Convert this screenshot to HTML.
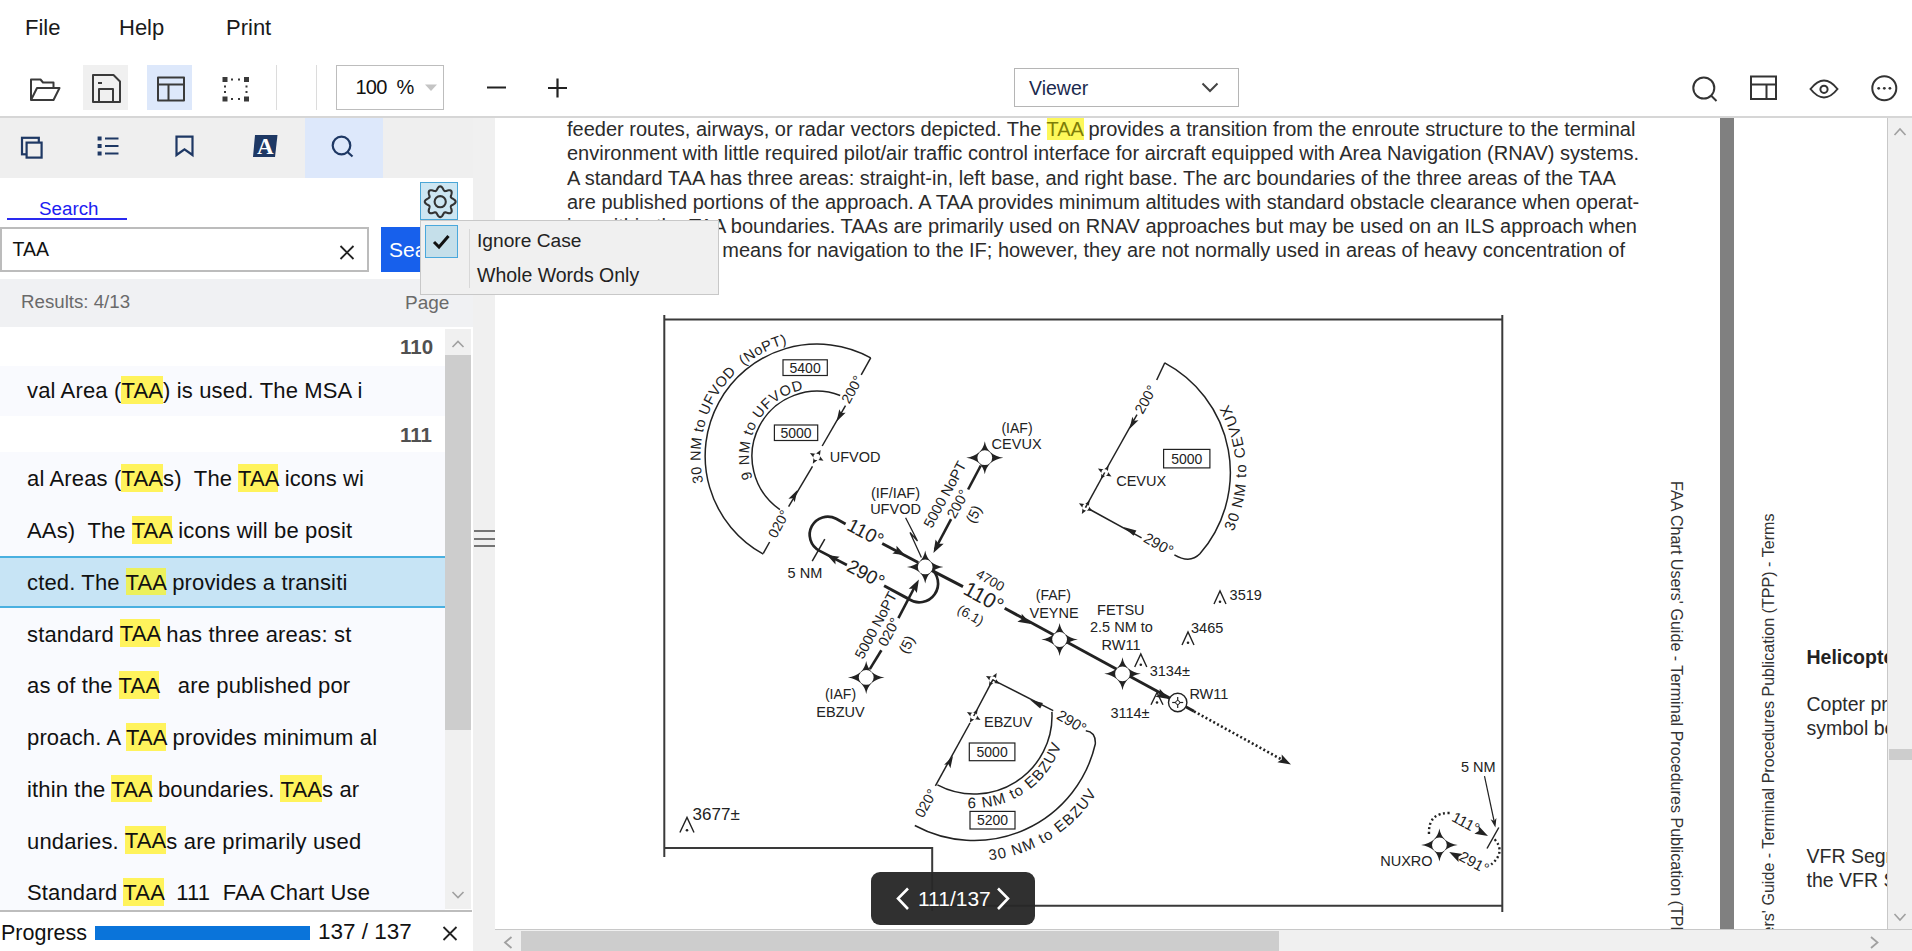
<!DOCTYPE html>
<html><head><meta charset="utf-8">
<style>
*{box-sizing:border-box}
html,body{margin:0;padding:0}
body{width:1912px;height:951px;overflow:hidden;position:relative;background:#fff;font-family:"Liberation Sans",sans-serif;color:#111}
.a{position:absolute}
.t{position:absolute;white-space:pre;line-height:1}
svg{position:absolute;overflow:visible}
.menu{font-size:22px;color:#1a1a1a;top:16.6px}
.hl{background:#fff35c}
.row{position:absolute;left:0;width:445px;background:#f9fafe}
.rt{position:absolute;left:27px;font-size:22px;letter-spacing:0.15px;white-space:pre;line-height:1;color:#111}
.rt .hl{padding:2.4px 0 0.6px}
.row.sel{background:#c7e4f5;border-top:2.5px solid #4ab0e0;border-bottom:2px solid #4ab0e0}
.doc{font-size:20px;color:#2b2b2b;left:567px}
</style></head>
<body>
<!-- menu -->
<div class="t menu" style="left:25px">File</div>
<div class="t menu" style="left:119px">Help</div>
<div class="t menu" style="left:226px">Print</div>

<!-- toolbar -->
<div class="a" style="left:83px;top:65px;width:45px;height:45px;background:#f0f0f0"></div>
<div class="a" style="left:147px;top:65px;width:45px;height:45px;background:#dde8fb"></div>
<div class="a" style="left:276px;top:65px;width:1px;height:45px;background:#dcdcdc"></div>
<div class="a" style="left:316px;top:65px;width:1px;height:45px;background:#dcdcdc"></div>
<div class="a" style="left:336px;top:65px;width:108px;height:45px;border:1px solid #bdbdbd;background:#fff"></div>
<div class="t" style="left:355.5px;top:77px;font-size:20px;color:#111;letter-spacing:-0.8px">100</div>
<div class="t" style="left:396.5px;top:77px;font-size:20px;color:#111">%</div>
<svg style="left:0;top:0" width="1912" height="118">
 <!-- open folder -->
 <g fill="none" stroke="#3a3a3a" stroke-width="2" stroke-linejoin="round">
  <path d="M31 100 L31 79.5 L40.5 79.5 L43 82.5 L53.5 82.5 L53.5 88"/>
  <path d="M31 100 L37 88 L59.5 88 L53.5 100 Z"/>
  <!-- save -->
  <path d="M93 75 L113.5 75 L120 81.5 L120 102 L93 102 Z"/>
  <path d="M99 102 L99 89 L113 89 L113 102"/>
  <path d="M98 83 L102 83"/>
  <!-- layout -->
  <rect x="158" y="77.5" width="26" height="23"/>
  <path d="M158 84.5 L184 84.5 M168.5 84.5 L168.5 100.5"/>
 </g>
 <!-- selection -->
 <g fill="#3a3a3a">
  <rect x="222.5" y="77" width="5" height="5"/><rect x="244" y="77" width="5" height="5"/>
  <rect x="222.5" y="96.5" width="5" height="5"/><rect x="244" y="96.5" width="5" height="5"/>
  <rect x="231" y="78.5" width="2" height="2"/><rect x="238" y="78.5" width="2" height="2"/>
  <rect x="231" y="98" width="2" height="2"/><rect x="238" y="98" width="2" height="2"/>
  <rect x="224" y="85.5" width="2" height="2"/><rect x="224" y="91" width="2" height="2"/>
  <rect x="245.5" y="85.5" width="2" height="2"/><rect x="245.5" y="91" width="2" height="2"/>
 </g>
 <!-- zoom dropdown triangle -->
 <path d="M425 84.5 L437 84.5 L431 91 Z" fill="#c4c4c4"/>
 <!-- minus plus -->
 <path d="M487 87.5 L506 87.5 M548 88 L567 88 M557.5 78.5 L557.5 97.5" stroke="#222" stroke-width="2.2" fill="none"/>
 <!-- right icons -->
 <g fill="none" stroke="#333" stroke-width="2">
  <circle cx="1703.8" cy="88" r="10.5"/>
  <path d="M1711 95.5 L1716.5 101"/>
  <rect x="1751" y="76.5" width="25" height="22.5"/>
  <path d="M1751 84.5 L1776 84.5 M1766.5 84.5 L1766.5 99"/>
  <path d="M1810.5 89 Q1824 72 1837.5 89 Q1824 106 1810.5 89 Z"/>
  <circle cx="1824" cy="89.3" r="3.6"/>
  <circle cx="1884.3" cy="88.3" r="12"/>
 </g>
 <g fill="#333"><circle cx="1878.7" cy="88.3" r="1.4"/><circle cx="1884.3" cy="88.3" r="1.4"/><circle cx="1889.9" cy="88.3" r="1.4"/></g>
</svg>
<!-- viewer dropdown -->
<div class="a" style="left:1014px;top:68px;width:225px;height:39px;border:1px solid #b5b5b5;background:#fff"></div>
<div class="t" style="left:1029px;top:78.5px;font-size:19.5px;color:#1b2a4e">Viewer</div>
<svg style="left:1200px;top:80px" width="22" height="16"><path d="M2.5 3.5 L10 11 L17.5 3.5" fill="none" stroke="#444" stroke-width="2"/></svg>

<!-- toolbar bottom line -->
<div class="a" style="left:0;top:116px;width:1912px;height:2px;background:#d6d6d6"></div>

<!-- LEFT PANEL -->
<div class="a" style="left:0;top:118px;width:473px;height:60px;background:#efefef"></div>
<div class="a" style="left:305px;top:118px;width:78px;height:60px;background:#dde8fb"></div>
<div class="a" style="left:0;top:178px;width:473px;height:101px;background:#fff"></div>
<svg style="left:0;top:118px" width="473" height="60">
 <g fill="none" stroke="#1e3864" stroke-width="2.2">
  <rect x="22" y="19.8" width="16.8" height="16.5"/>
  <rect x="26.6" y="24.6" width="15" height="15" fill="#efefef"/>
  <path d="M97.6 20.5 L101.6 20.5 M97.6 28 L101.6 28 M97.6 35.5 L101.6 35.5" stroke-width="4"/>
  <path d="M105 20.5 L118.5 20.5 M105 28 L118.5 28 M105 35.5 L118.5 35.5"/>
  <path d="M176.5 18.6 L192.5 18.6 L192.5 37 L184.5 31.3 L176.5 37 Z"/>
  <circle cx="341.5" cy="27.5" r="8.8"/>
  <path d="M347.5 34 L352.5 38.5"/>
 </g>
 <path d="M255 17 L277.5 17 L275 39 L253 39 Z" fill="#1e3864"/>
 <text x="265.2" y="36.3" font-family="Liberation Serif" font-size="23" font-weight="bold" fill="#fff" text-anchor="middle">A</text>
</svg>
<!-- inner white panel in left pane; the area behind tab strip white bg extends -->
<div class="t" style="left:39px;top:199.5px;font-size:18.8px;color:#1c1cf2">Search</div>
<div class="a" style="left:7px;top:217.5px;width:120px;height:2px;background:#2a2af0"></div>
<!-- gear button -->
<div class="a" style="left:420px;top:182px;width:38px;height:38px;border:1px solid #4aa6d6;background:#cde6f2"></div>
<svg style="left:420px;top:182px" width="38" height="38">
 <path fill="none" stroke="#333" stroke-width="2.1" d="M35.60 19.70 L35.50 20.30 L35.19 20.88 L34.72 21.42 L34.11 21.90 L33.44 22.33 L32.76 22.71 L32.12 23.06 L31.58 23.40 L31.17 23.75 L30.92 24.14 L30.82 24.60 L30.86 25.13 L31.00 25.75 L31.21 26.45 L31.42 27.20 L31.60 27.98 L31.68 28.75 L31.63 29.47 L31.44 30.09 L31.09 30.59 L30.59 30.94 L29.97 31.13 L29.25 31.18 L28.48 31.10 L27.70 30.92 L26.95 30.71 L26.25 30.50 L25.63 30.36 L25.10 30.32 L24.64 30.42 L24.25 30.67 L23.90 31.08 L23.56 31.62 L23.21 32.26 L22.83 32.94 L22.40 33.61 L21.92 34.22 L21.38 34.69 L20.80 35.00 L20.20 35.10 L19.60 35.00 L19.02 34.69 L18.48 34.22 L18.00 33.61 L17.57 32.94 L17.19 32.26 L16.84 31.62 L16.50 31.08 L16.15 30.67 L15.76 30.42 L15.30 30.32 L14.77 30.36 L14.15 30.50 L13.45 30.71 L12.70 30.92 L11.92 31.10 L11.15 31.18 L10.43 31.13 L9.81 30.94 L9.31 30.59 L8.96 30.09 L8.77 29.47 L8.72 28.75 L8.80 27.98 L8.98 27.20 L9.19 26.45 L9.40 25.75 L9.54 25.13 L9.58 24.60 L9.48 24.14 L9.23 23.75 L8.82 23.40 L8.28 23.06 L7.64 22.71 L6.96 22.33 L6.29 21.90 L5.68 21.42 L5.21 20.88 L4.90 20.30 L4.80 19.70 L4.90 19.10 L5.21 18.52 L5.68 17.98 L6.29 17.50 L6.96 17.07 L7.64 16.69 L8.28 16.34 L8.82 16.00 L9.23 15.65 L9.48 15.26 L9.58 14.80 L9.54 14.27 L9.40 13.65 L9.19 12.95 L8.98 12.20 L8.80 11.42 L8.72 10.65 L8.77 9.93 L8.96 9.31 L9.31 8.81 L9.81 8.46 L10.43 8.27 L11.15 8.22 L11.92 8.30 L12.70 8.48 L13.45 8.69 L14.15 8.90 L14.77 9.04 L15.30 9.08 L15.76 8.98 L16.15 8.73 L16.50 8.32 L16.84 7.78 L17.19 7.14 L17.57 6.46 L18.00 5.79 L18.48 5.18 L19.02 4.71 L19.60 4.40 L20.20 4.30 L20.80 4.40 L21.38 4.71 L21.92 5.18 L22.40 5.79 L22.83 6.46 L23.21 7.14 L23.56 7.78 L23.90 8.32 L24.25 8.73 L24.64 8.98 L25.10 9.08 L25.63 9.04 L26.25 8.90 L26.95 8.69 L27.70 8.48 L28.48 8.30 L29.25 8.22 L29.97 8.27 L30.59 8.46 L31.09 8.81 L31.44 9.31 L31.63 9.93 L31.68 10.65 L31.60 11.42 L31.42 12.20 L31.21 12.95 L31.00 13.65 L30.86 14.27 L30.82 14.80 L30.92 15.26 L31.17 15.65 L31.58 16.00 L32.12 16.34 L32.76 16.69 L33.44 17.07 L34.11 17.50 L34.72 17.98 L35.19 18.52 L35.50 19.10 Z"/>
 <circle cx="20.2" cy="19.7" r="5.6" fill="none" stroke="#333" stroke-width="2.1"/>
</svg>
<!-- search input -->
<div class="a" style="left:0;top:227px;width:369px;height:45px;border:2px solid #bcbcbc;background:#fff"></div>
<div class="t" style="left:12.5px;top:240px;font-size:19.5px;color:#111">TAA</div>
<svg style="left:338px;top:243px" width="18" height="18"><path d="M2.5 3 L15.5 16 M15.5 3 L2.5 16" stroke="#222" stroke-width="1.8"/></svg>
<div class="a" style="left:381px;top:227px;width:45px;height:45px;background:#1760ec"></div>
<div class="t" style="left:389px;top:239px;font-size:21px;color:#fff">Sea</div>

<!-- results bar -->
<div class="a" style="left:0;top:279px;width:473px;height:48px;background:#f0f1f3"></div>
<div class="t" style="left:21px;top:293px;font-size:18.7px;color:#6a6a6a">Results: 4/13</div>
<div class="t" style="left:405px;top:293px;font-size:19px;color:#6a6a6a">Page</div>

<!-- results list -->
<div class="a" style="left:0;top:327px;width:473px;height:583px;background:#fff"></div>
<div class="row" style="top:365.6px;height:50.9px"></div>
<div class="row" style="top:452.2px;height:457.8px"></div>
<div class="rt" style="top:380.4px">val Area (<span class="hl">TAA</span>) is used. The MSA i</div>
<div class="rt" style="top:468.4px">al Areas (<span class="hl">TAA</span>s)  The <span class="hl">TAA</span> icons wi</div>
<div class="rt" style="top:520.2px">AAs)  The <span class="hl">TAA</span> icons will be posit</div>
<div class="row sel" style="top:555.7px;height:52.5px"></div>
<div class="rt" style="top:571.9px">cted. The <span class="hl" style="background:#ecf05c">TAA</span> provides a transiti</div>
<div class="rt" style="top:623.6px">standard <span class="hl">TAA</span> has three areas: st</div>
<div class="rt" style="top:675.4px">as of the <span class="hl">TAA</span>   are published por</div>
<div class="rt" style="top:727.1px">proach. A <span class="hl">TAA</span> provides minimum al</div>
<div class="rt" style="top:778.9px">ithin the <span class="hl">TAA</span> boundaries. <span class="hl">TAA</span>s ar</div>
<div class="rt" style="top:830.6px">undaries. <span class="hl">TAA</span>s are primarily used</div>
<div class="rt" style="top:882.4px">Standard <span class="hl">TAA</span>  111  FAA Chart Use</div>
<div class="t" style="left:400px;top:336.9px;font-size:20.5px;font-weight:bold;color:#505050">110</div>
<div class="t" style="left:400px;top:424.7px;font-size:20.5px;font-weight:bold;color:#505050">111</div>
<!-- list scrollbar -->
<div class="a" style="left:445px;top:329px;width:26px;height:580px;background:#f0f0f0"></div>
<div class="a" style="left:445px;top:355px;width:26px;height:375px;background:#cdcdcd"></div>
<svg style="left:445px;top:329px" width="26" height="580">
 <path d="M7.5 18 L13 12.5 L18.5 18" fill="none" stroke="#a0a0a0" stroke-width="1.6"/>
 <path d="M7.5 563 L13 568.5 L18.5 563" fill="none" stroke="#a0a0a0" stroke-width="1.6"/>
</svg>
<!-- progress -->
<div class="a" style="left:0;top:910px;width:472px;height:2px;background:#bdbdbd"></div>
<div class="t" style="left:1px;top:923.3px;font-size:21.5px;color:#111">Progress</div>
<div class="a" style="left:94.5px;top:926px;width:215.5px;height:14px;background:#0a74da"></div>
<div class="t" style="left:318px;top:921.4px;font-size:22.5px;color:#111">137 / 137</div>
<svg style="left:441px;top:925px" width="18" height="17"><path d="M2.5 2 L15.5 15 M15.5 2 L2.5 15" stroke="#222" stroke-width="1.8"/></svg>

<!-- splitter -->
<div class="a" style="left:473px;top:118px;width:22px;height:833px;background:#f0f0f0"></div>
<div class="a" style="left:474px;top:530px;width:21px;height:2px;background:#747474"></div>
<div class="a" style="left:474px;top:537.5px;width:21px;height:2px;background:#747474"></div>
<div class="a" style="left:474px;top:545px;width:21px;height:2px;background:#747474"></div>

<!-- document -->
<div class="a" style="left:1719.5px;top:118px;width:14px;height:811px;background:#808080"></div>
<div class="a" style="left:1046.5px;top:118px;width:37.5px;height:21.5px;background:#fdf85a"></div>
<div class="t doc" style="top:119px">feeder routes, airways, or radar vectors depicted. The <span style="color:#7d7d08">TAA</span> provides a transition from the enroute structure to the terminal</div>
<div class="t doc" style="top:143px">environment with little required pilot/air traffic control interface for aircraft equipped with Area Navigation (RNAV) systems.</div>
<div class="t doc" style="top:167.5px">A standard TAA has three areas: straight-in, left base, and right base. The arc boundaries of the three areas of the TAA</div>
<div class="t doc" style="top:191.5px">are published portions of the approach. A TAA provides minimum altitudes with standard obstacle clearance when operat-</div>
<div class="t doc" style="top:215.5px">ing within the TAA boundaries. TAAs are primarily used on RNAV approaches but may be used on an ILS approach when</div>
<div class="t doc" style="top:239.5px">RNAV is the sole means for navigation to the IF; however, they are not normally used in areas of heavy concentration of</div>

<!-- rotated footers -->
<div class="t" style="left:1684.6px;top:480.5px;font-size:16.1px;color:#333;transform-origin:0 0;transform:rotate(90deg)">FAA Chart Users' Guide - Terminal Procedures Publication (TPP) - Terms</div>
<div class="t" style="left:1759.9px;top:1032.6px;font-size:16.1px;color:#333;transform-origin:0 0;transform:rotate(-90deg)">FAA Chart Users' Guide - Terminal Procedures Publication (TPP) - Terms</div>
<div class="t" style="left:1806.5px;top:647.5px;font-size:19.5px;font-weight:bold;color:#222">Helicopter</div>
<div class="t" style="left:1806.5px;top:695px;font-size:19.5px;color:#2b2b2b">Copter procedures</div>
<div class="t" style="left:1806.5px;top:718.5px;font-size:19.5px;color:#2b2b2b">symbol below</div>
<div class="t" style="left:1806.5px;top:846.5px;font-size:19.5px;color:#2b2b2b">VFR Segment</div>
<div class="t" style="left:1806.5px;top:870.5px;font-size:19.5px;color:#2b2b2b">the VFR Segment</div>

<!-- CHART -->
<svg id="chart" style="left:0;top:0" width="1912" height="951" font-family="Liberation Sans" fill="#222">
<path d="M664.3 315 L664.3 857 M663.3 319.6 L1503.2 319.6 M1502.3 315 L1502.3 912 M664.3 848 L932.2 848 L932.2 911 M932.2 905.7 L1502.3 905.7" stroke="#3a3a3a" stroke-width="2" fill="none"/>
<path d="M870.7 357.8 A111.6 111.6 0 0 0 763.3 554.1" fill="none" stroke="#222" stroke-width="1.5"/>
<path d="M870.7 357.8 L861.2 374.9" fill="none" stroke="#222" stroke-width="1.5" />
<text x="0" y="0" transform="translate(851.8 389.5) rotate(-61.3)" font-size="14" text-anchor="middle" dominant-baseline="central" >200°</text>
<path d="M840.2 395.5 A65.0 65.0 0 0 0 779.9 509.6" fill="none" stroke="#222" stroke-width="1.5"/>
<path d="M845.5 405.6 L822.2 446.0" fill="none" stroke="#222" stroke-width="1.5" />
<path d="M836.6 421.4 L839.3 409.2 L841.2 413.1 L845.6 412.7 Z" fill="#222"/>
<path d="M820.6 450.1 L816.1 453.6 L819.9 455.7 Z" fill="#222"/>
<path d="M823.5 460.8 L820.0 456.3 L817.9 460.1 Z" fill="#222"/>
<path d="M812.8 463.7 L817.3 460.2 L813.5 458.1 Z" fill="#222"/>
<path d="M809.9 453.0 L813.4 457.5 L815.5 453.7 Z" fill="#222"/>
<circle cx="816.7" cy="456.9" r="3.2" fill="#fff"/>
<path d="M812.5 466.3 L788.6 506.7" fill="none" stroke="#222" stroke-width="1.5" />
<path d="M797.4 490.0 L794.7 502.2 L792.8 498.3 L788.4 498.7 Z" fill="#222"/>
<text x="0" y="0" transform="translate(778.5 523.8) rotate(-61.3)" font-size="14" text-anchor="middle" dominant-baseline="central" >020°</text>
<path d="M769.6 542.0 L763.3 553.3" fill="none" stroke="#222" stroke-width="1.5" />
<rect x="783.0" y="359.8" width="44.3" height="15.7" fill="none" stroke="#222" stroke-width="1.2"/>
<text x="0" y="0" transform="translate(805.1 367.7) rotate(0.0)" font-size="14" text-anchor="middle" dominant-baseline="central" >5400</text>
<rect x="774.4" y="425.0" width="43.3" height="15.5" fill="none" stroke="#222" stroke-width="1.2"/>
<text x="0" y="0" transform="translate(796.0 432.8) rotate(0.0)" font-size="14" text-anchor="middle" dominant-baseline="central" >5000</text>
<text x="829.7" y="461.7" font-size="14.5" text-anchor="start" >UFVOD</text>
<path id="tp1" d="M703.4 482.4 A116.5 116.5 0 0 1 788.7 343.2" fill="none" stroke="none"/>
<text font-size="14.5" letter-spacing="0.5"><textPath href="#tp1" startOffset="0">30 NM to UFVOD&#160; (NoPT)</textPath></text>
<path id="tp2" d="M752.6 478.3 A68.0 68.0 0 0 1 802.8 389.7" fill="none" stroke="none"/>
<text font-size="14.5" letter-spacing="0.8"><textPath href="#tp2" startOffset="0">9 NM to UFVOD</textPath></text>
<path d="M882.2 543.5 L918.2 562.5" fill="none" stroke="#222" stroke-width="3" />
<path d="M905.0 555.3 L892.3 553.6 L896.6 550.8 L896.5 545.7 Z" fill="#222"/>
<path d="M845.6 524 L836.2 518.8 A18 18 0 0 0 819.2 550.6 L846.9 565" fill="none" stroke="#222" stroke-width="2.7"/>
<path d="M827.0 555.0 L839.7 556.7 L835.4 559.5 L835.5 564.6 Z" fill="#222"/>
<path d="M884.1 585.8 L908.5 598.9" fill="none" stroke="#222" stroke-width="3" />
<path d="M908.5 598.9 A18 18 0 0 0 930 568" fill="none" stroke="#222" stroke-width="2.7"/>
<text x="0" y="0" transform="translate(865.5 532.5) rotate(28.0)" font-size="19" text-anchor="middle" dominant-baseline="central" >110°</text>
<text x="0" y="0" transform="translate(865.8 573.8) rotate(28.0)" font-size="19" text-anchor="middle" dominant-baseline="central" >290°</text>
<path d="M824.8 539.1 L812.2 561.2" fill="none" stroke="#222" stroke-width="1.5" />
<text x="787.6" y="578.3" font-size="14.5" text-anchor="start" >5 NM</text>
<text x="895.5" y="498.0" font-size="14.5" text-anchor="middle" >(IF/IAF)</text>
<text x="895.5" y="513.5" font-size="14.5" text-anchor="middle" >UFVOD</text>
<path d="M905.6 517.7 L917.5 541.0 L910.0 532.5 L921.4 557.5" fill="none" stroke="#222" stroke-width="1.3" />
<path d="M980.8 465.5 L968.1 489.5" fill="none" stroke="#222" stroke-width="2.6" />
<path d="M951.1 519.1 L935.0 549.5" fill="none" stroke="#222" stroke-width="2.6" />
<path d="M933.4 553.0 L935.6 539.4 L938.4 543.8 L943.7 543.8 Z" fill="#222"/>
<text x="0" y="0" transform="translate(944.8 494.5) rotate(-61.4)" font-size="14.5" text-anchor="middle" dominant-baseline="central" >5000 NoPT</text>
<text x="0" y="0" transform="translate(957.7 504.0) rotate(-61.4)" font-size="14.5" text-anchor="middle" dominant-baseline="central" >200°</text>
<text x="0" y="0" transform="translate(973.8 514.1) rotate(-61.4)" font-size="14.5" text-anchor="middle" dominant-baseline="central" >(5)</text>
<path d="M869.8 669.1 L881.4 650.3" fill="none" stroke="#222" stroke-width="2.6" />
<path d="M898.4 618.1 L916.5 583.5" fill="none" stroke="#222" stroke-width="2.6" />
<path d="M918.9 579.5 L916.8 593.1 L914.0 588.8 L908.7 588.8 Z" fill="#222"/>
<text x="0" y="0" transform="translate(875.8 625.3) rotate(-62.0)" font-size="14.5" text-anchor="middle" dominant-baseline="central" >5000 NoPT</text>
<text x="0" y="0" transform="translate(889.0 632.0) rotate(-62.0)" font-size="14.5" text-anchor="middle" dominant-baseline="central" >020°</text>
<text x="0" y="0" transform="translate(906.7 644.5) rotate(-62.0)" font-size="14.5" text-anchor="middle" dominant-baseline="central" >(5)</text>
<path d="M931.6 570.4 L963.0 586.7" fill="none" stroke="#222" stroke-width="3" />
<text x="0" y="0" transform="translate(983.9 596.8) rotate(28.6)" font-size="21" text-anchor="middle" dominant-baseline="central" >110°</text>
<text x="0" y="0" transform="translate(990.2 580.4) rotate(30.0)" font-size="13.5" text-anchor="middle" dominant-baseline="central" >4700</text>
<text x="0" y="0" transform="translate(970.6 615.2) rotate(30.0)" font-size="13.5" text-anchor="middle" dominant-baseline="central" >(6.1)</text>
<path d="M1004.7 608.2 L1194.0 711.3" fill="none" stroke="#222" stroke-width="3" />
<path d="M1031.0 624.0 L1017.4 621.7 L1021.8 619.0 L1021.7 613.8 Z" fill="#222"/>
<path d="M1169.0 699.0 L1155.4 696.7 L1159.8 694.0 L1159.7 688.8 Z" fill="#222"/>
<path d="M1194 711.3 L1283 760.3" fill="none" stroke="#222" stroke-width="2.6" stroke-dasharray="2 2.4"/>
<path d="M1291.0 764.6 L1277.4 762.3 L1281.8 759.6 L1281.7 754.4 Z" fill="#222"/>
<path d="M925.2 550.4 Q927.6 564.5 943.5 566.9 Q927.6 569.3 925.2 583.4 Q922.8 569.3 906.9 566.9 Q922.8 564.5 925.2 550.4 Z" fill="#222"/>
<circle cx="925.2" cy="566.9" r="7.4" fill="#fff"/>
<path d="M984.8 441.2 Q987.2 455.3 1003.4 457.7 Q987.2 460.1 984.8 474.2 Q982.4 460.1 966.2 457.7 Q982.4 455.3 984.8 441.2 Z" fill="#222"/>
<circle cx="984.8" cy="457.7" r="7.4" fill="#fff"/>
<path d="M866.2 660.9 Q868.6 675.0 884.5 677.4 Q868.6 679.8 866.2 693.9 Q863.8 679.8 847.9 677.4 Q863.8 675.0 866.2 660.9 Z" fill="#222"/>
<circle cx="866.2" cy="677.4" r="7.4" fill="#fff"/>
<path d="M1059.6 623.0 Q1062.0 637.1 1077.9 639.5 Q1062.0 641.9 1059.6 656.0 Q1057.2 641.9 1041.3 639.5 Q1057.2 637.1 1059.6 623.0 Z" fill="#222"/>
<circle cx="1059.6" cy="639.5" r="7.4" fill="#fff"/>
<path d="M1122.5 657.3 Q1124.9 671.4 1140.8 673.8 Q1124.9 676.2 1122.5 690.3 Q1120.1 676.2 1104.2 673.8 Q1120.1 671.4 1122.5 657.3 Z" fill="#222"/>
<circle cx="1122.5" cy="673.8" r="7.4" fill="#fff"/>
<circle cx="1177.7" cy="702.5" r="9.2" fill="#fff" stroke="#222" stroke-width="1.4"/>
<path d="M1177.7 697.0 L1177.7 708.0" fill="none" stroke="#222" stroke-width="1.2" />
<path d="M1172.2 702.5 L1183.2 702.5" fill="none" stroke="#222" stroke-width="1.2" />
<circle cx="1177.7" cy="702.5" r="2" fill="#fff" stroke="#222" stroke-width="1"/>
<text x="1017.0" y="433.0" font-size="14" text-anchor="middle" >(IAF)</text>
<text x="1016.6" y="448.5" font-size="14.5" text-anchor="middle" >CEVUX</text>
<text x="840.5" y="699.0" font-size="14" text-anchor="middle" >(IAF)</text>
<text x="840.5" y="716.6" font-size="14.5" text-anchor="middle" >EBZUV</text>
<text x="1053.3" y="599.8" font-size="14" text-anchor="middle" >(FAF)</text>
<text x="1054.1" y="617.5" font-size="14.5" text-anchor="middle" >VEYNE</text>
<text x="1120.8" y="615.3" font-size="14.5" text-anchor="middle" >FETSU</text>
<text x="1121.4" y="632.3" font-size="14.5" text-anchor="middle" >2.5 NM to</text>
<text x="1121.0" y="649.5" font-size="14.5" text-anchor="middle" >RW11</text>
<text x="1189.4" y="698.5" font-size="14.5" text-anchor="start" >RW11</text>
<path d="M1214.0 604.0 L1220.0 591.0 L1226.0 604.0" fill="none" stroke="#222" stroke-width="1.4" />
<circle cx="1220.0" cy="601.8" r="1.3" fill="#222"/>
<text x="1229.6" y="599.8" font-size="14.5" text-anchor="start" >3519</text>
<path d="M1182.0 645.0 L1188.0 632.0 L1194.0 645.0" fill="none" stroke="#222" stroke-width="1.4" />
<circle cx="1188.0" cy="642.8" r="1.3" fill="#222"/>
<text x="1191.0" y="633.0" font-size="14.5" text-anchor="start" >3465</text>
<path d="M1134.7 667.0 L1140.8 654.0 L1146.8 667.0" fill="none" stroke="#222" stroke-width="1.4" />
<circle cx="1140.8" cy="664.8" r="1.3" fill="#222"/>
<text x="1149.7" y="676.0" font-size="14.5" text-anchor="start" >3134±</text>
<path d="M1151.0 704.7 L1157.0 692.5 L1163.0 704.7" fill="none" stroke="#222" stroke-width="1.4" />
<circle cx="1157.0" cy="702.5" r="1.3" fill="#222"/>
<text x="1110.4" y="717.5" font-size="14.5" text-anchor="start" >3114±</text>
<path d="M679.9 832.5 L687.0 817.4 L694.0 832.5" fill="none" stroke="#222" stroke-width="1.4" />
<circle cx="687.0" cy="830.3" r="1.3" fill="#222"/>
<text x="692.6" y="819.7" font-size="17" text-anchor="start" >3677±</text>
<path d="M1108.6 465.7 L1104.1 469.2 L1107.9 471.3 Z" fill="#222"/>
<path d="M1111.5 476.4 L1108.0 471.9 L1105.9 475.7 Z" fill="#222"/>
<path d="M1100.8 479.3 L1105.3 475.8 L1101.5 473.7 Z" fill="#222"/>
<path d="M1097.9 468.6 L1101.4 473.1 L1103.5 469.3 Z" fill="#222"/>
<circle cx="1104.7" cy="472.5" r="3.2" fill="#fff"/>
<path d="M1089.6 500.4 L1085.1 503.9 L1088.9 506.0 Z" fill="#222"/>
<path d="M1092.5 511.1 L1089.0 506.6 L1086.9 510.4 Z" fill="#222"/>
<path d="M1081.8 514.0 L1086.3 510.5 L1082.5 508.4 Z" fill="#222"/>
<path d="M1078.9 503.3 L1082.4 507.8 L1084.5 504.0 Z" fill="#222"/>
<circle cx="1085.7" cy="507.2" r="3.2" fill="#fff"/>
<circle cx="1085.7" cy="507.2" r="0.9" fill="#666"/>
<path d="M1085.7 507.2 L1104.7 472.5" fill="none" stroke="#222" stroke-width="1.5" />
<path d="M1107.0 468.0 L1137.0 414.7" fill="none" stroke="#222" stroke-width="1.5" />
<path d="M1129.5 429.0 L1132.3 416.8 L1134.2 420.7 L1138.5 420.3 Z" fill="#222"/>
<text x="0" y="0" transform="translate(1145.7 399.5) rotate(-61.0)" font-size="14.5" text-anchor="middle" dominant-baseline="central" >200°</text>
<path d="M1156.7 380.0 L1164.8 362.7" fill="none" stroke="#222" stroke-width="1.5" />
<path d="M1164.7 362.9 A124.1 124.1 0 0 1 1199.9 553.8 Q1190 564 1174.4 554.8" fill="none" stroke="#222" stroke-width="1.5"/>
<path d="M1089.0 509.0 L1141.6 537.8" fill="none" stroke="#222" stroke-width="1.5" />
<path d="M1123.5 527.0 L1136.4 530.5 L1135.0 533.1 L1133.6 535.8 Z" fill="#222"/>
<text x="0" y="0" transform="translate(1158.8 544.0) rotate(29.0)" font-size="15" text-anchor="middle" dominant-baseline="central" >290°</text>
<rect x="1163.6" y="449.4" width="46.3" height="18.5" fill="none" stroke="#222" stroke-width="1.2"/>
<text x="0" y="0" transform="translate(1186.8 458.6) rotate(0.0)" font-size="14" text-anchor="middle" dominant-baseline="central" >5000</text>
<text x="1116.2" y="486.0" font-size="14.5" text-anchor="start" >CEVUX</text>
<path id="tp3" d="M1233.1 531.6 A140.0 140.0 0 0 0 1223.6 396.2" fill="none" stroke="none"/>
<text font-size="15" letter-spacing="1.2"><textPath href="#tp3" startOffset="0">30 NM to CEVUX</textPath></text>
<path d="M996.7 673.0 L992.2 676.5 L996.0 678.6 Z" fill="#222"/>
<path d="M999.6 683.7 L996.1 679.2 L994.0 683.0 Z" fill="#222"/>
<path d="M988.9 686.6 L993.4 683.1 L989.6 681.0 Z" fill="#222"/>
<path d="M986.0 675.9 L989.5 680.4 L991.6 676.6 Z" fill="#222"/>
<circle cx="992.8" cy="679.8" r="3.2" fill="#fff"/>
<circle cx="992.8" cy="679.8" r="0.9" fill="#666"/>
<path d="M977.6 709.2 L973.1 712.7 L976.9 714.8 Z" fill="#222"/>
<path d="M980.5 719.9 L977.0 715.4 L974.9 719.2 Z" fill="#222"/>
<path d="M969.8 722.8 L974.3 719.3 L970.5 717.2 Z" fill="#222"/>
<path d="M966.9 712.1 L970.4 716.6 L972.5 712.8 Z" fill="#222"/>
<circle cx="973.7" cy="716.0" r="3.2" fill="#fff"/>
<path d="M992.8 679.8 L973.7 716.0" fill="none" stroke="#222" stroke-width="1.5" />
<path d="M970.0 723.0 L935.4 785.8" fill="none" stroke="#222" stroke-width="1.5" />
<path d="M953.0 756.0 L950.4 768.3 L948.5 764.3 L944.1 764.8 Z" fill="#222"/>
<text x="0" y="0" transform="translate(925.8 803.3) rotate(-61.0)" font-size="14.5" text-anchor="middle" dominant-baseline="central" >020°</text>
<path d="M914.8 825.5 A124.5 124.5 0 0 0 1095.3 744.0 Q1096 732 1085.8 730.7" fill="none" stroke="#222" stroke-width="1.5"/>
<path d="M937.4 784.9 A78.0 78.0 0 0 0 1051.9 711.9" fill="none" stroke="#222" stroke-width="1.5"/>
<path d="M992.8 679.8 L1053.2 710.7" fill="none" stroke="#222" stroke-width="1.5" />
<path d="M1030.0 699.8 L1042.9 703.0 L1041.6 705.7 L1040.2 708.4 Z" fill="#222"/>
<text x="0" y="0" transform="translate(1072.0 721.5) rotate(31.0)" font-size="15" text-anchor="middle" dominant-baseline="central" >290°</text>
<text x="984.0" y="726.9" font-size="14.5" text-anchor="start" >EBZUV</text>
<rect x="969.3" y="743.0" width="45.6" height="17.7" fill="none" stroke="#222" stroke-width="1.2"/>
<text x="0" y="0" transform="translate(992.1 751.9) rotate(0.0)" font-size="14" text-anchor="middle" dominant-baseline="central" >5000</text>
<rect x="970.0" y="811.4" width="45.0" height="17.6" fill="none" stroke="#222" stroke-width="1.2"/>
<text x="0" y="0" transform="translate(992.5 820.2) rotate(0.0)" font-size="14" text-anchor="middle" dominant-baseline="central" >5200</text>
<path id="tp4" d="M967.6 807.8 A92.0 92.0 0 0 0 1064.6 732.0" fill="none" stroke="none"/>
<text font-size="15" letter-spacing="1.2"><textPath href="#tp4" startOffset="0">6 NM to EBZUV</textPath></text>
<path id="tp5" d="M989.2 860.2 A145.0 145.0 0 0 0 1102.0 784.1" fill="none" stroke="none"/>
<text font-size="15" letter-spacing="1.2"><textPath href="#tp5" startOffset="0">30 NM to EBZUV</textPath></text>
<path d="M1439.4 828.4 Q1441.8 842.5 1457.7 844.9 Q1441.8 847.3 1439.4 861.4 Q1437.0 847.3 1421.1 844.9 Q1437.0 842.5 1439.4 828.4 Z" fill="#222"/>
<circle cx="1439.4" cy="844.9" r="7.4" fill="#fff"/>
<text x="1380.2" y="866.2" font-size="14.5" text-anchor="start" >NUXRO</text>
<text x="1461.0" y="772.0" font-size="14.5" text-anchor="start" >5 NM</text>
<path d="M1484.5 776.2 L1494.5 823.0" fill="none" stroke="#222" stroke-width="1.2" />
<path d="M1495.4 827.5 L1490.6 819.3 L1494.0 821.1 L1496.4 818.1 Z" fill="#222"/>
<path d="M1498.8 827.5 L1487.0 848.5" fill="none" stroke="#222" stroke-width="1.5" />
<path d="M1429 834 Q1428 812 1451 813" fill="none" stroke="#222" stroke-width="2.4" stroke-dasharray="2 2.6"/>
<path d="M1494.6 839.3 Q1506 852 1491.2 864.5" fill="none" stroke="#222" stroke-width="2.4" stroke-dasharray="2 2.6"/>
<text x="0" y="0" transform="translate(1466.0 822.5) rotate(28.0)" font-size="15" text-anchor="middle" dominant-baseline="central" >111°</text>
<path d="M1488.0 836.0 L1474.4 833.8 L1478.7 831.1 L1478.7 825.9 Z" fill="#222"/>
<text x="0" y="0" transform="translate(1474.4 862.3) rotate(28.0)" font-size="15" text-anchor="middle" dominant-baseline="central" >291°</text>
<path d="M1449.2 851.9 L1462.8 854.1 L1458.5 856.8 L1458.5 862.0 Z" fill="#222"/>
</svg>

<!-- right scrollbar -->
<div class="a" style="left:1887px;top:118px;width:25px;height:833px;background:#f0f0f0;border-left:1.5px solid #c8c8c8"></div>
<div class="a" style="left:1888.5px;top:749px;width:23.5px;height:11px;background:#cdcdcd"></div>
<svg style="left:1888px;top:118px" width="24" height="811">
 <path d="M6.5 17 L12 11 L17.5 17" fill="none" stroke="#a0a0a0" stroke-width="1.6"/>
 <path d="M6.5 796 L12 802 L17.5 796" fill="none" stroke="#a0a0a0" stroke-width="1.6"/>
</svg>
<!-- bottom scrollbar -->
<div class="a" style="left:495px;top:929px;width:1417px;height:22px;background:#f0f0f0;border-top:1.5px solid #c8c8c8"></div>
<div class="a" style="left:521px;top:930.5px;width:758px;height:20.5px;background:#cdcdcd"></div>
<svg style="left:495px;top:929px" width="1417" height="22">
 <path d="M16.5 8 L10 13.5 L16.5 19" fill="none" stroke="#a0a0a0" stroke-width="1.8"/>
 <path d="M1376 8 L1382.5 13.5 L1376 19" fill="none" stroke="#a0a0a0" stroke-width="1.8"/>
</svg>

<!-- page nav pill -->
<div class="a" style="left:871px;top:872px;width:164px;height:53px;border-radius:9px;background:rgba(40,40,40,0.96)"></div>
<svg style="left:871px;top:872px" width="164" height="53">
 <path d="M37 16.5 L27 26.5 L37 37" fill="none" stroke="#fff" stroke-width="2.6"/>
 <path d="M127 16.5 L137 26.5 L127 37" fill="none" stroke="#fff" stroke-width="2.6"/>
</svg>
<div class="t" style="left:918px;top:887.5px;font-size:21px;color:#fff">111/137</div>

<!-- options dropdown -->
<div class="a" style="left:420px;top:220px;width:299px;height:75px;background:#f0f0f0;border:1px solid #c8c8c8"></div>
<div class="a" style="left:424.5px;top:225px;width:33px;height:33px;background:#c5dfea;border:1.5px solid #4aa8dc"></div>
<svg style="left:424.5px;top:225px" width="33" height="33"><path d="M9 17 L14 22 L23.5 11" fill="none" stroke="#111" stroke-width="3"/></svg>
<div class="a" style="left:468.5px;top:229px;width:1px;height:59px;background:#d8d8d8"></div>
<div class="t" style="left:477px;top:231.3px;font-size:19.2px;color:#222">Ignore Case</div>
<div class="t" style="left:477px;top:265.8px;font-size:19.5px;color:#222">Whole Words Only</div>

</body></html>
